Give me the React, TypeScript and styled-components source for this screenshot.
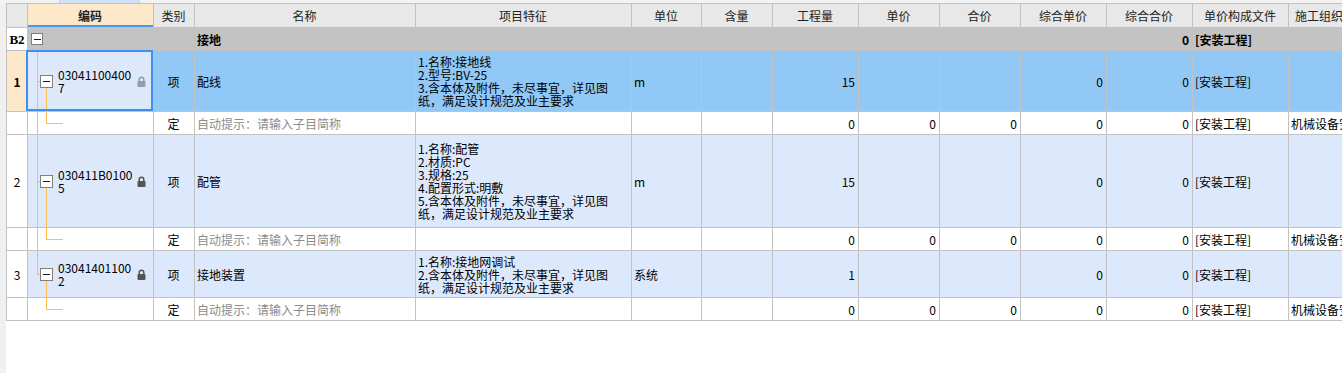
import React from 'react';
import styled, { createGlobalStyle, css } from 'styled-components';

const GlobalStyle = createGlobalStyle`
  html, body {
    margin: 0;
    padding: 0;
    background: #fff;
    overflow: hidden;
  }
  body {
    font-family: "Noto Sans CJK SC", "Liberation Sans", sans-serif;
    font-size: 12px;
    color: #000;
  }
`;

const COLUMNS = '21px 126px 41px 221px 216px 70px 71px 86px 81px 81px 86px 86px 96px 110px';
const GRID_LINE = '#c2c2c2';
const TREE = '#ffbd55';

type Tone = 'header' | 'group' | 'selected' | 'item' | 'sub';

const TONES: Record<Tone, string> = {
  header: '#e8e8e8',
  group: '#c3c3c3',
  selected: '#91c8f5',
  item: '#dce9fc',
  sub: '#ffffff',
};

const Page = styled.div`
  width: 1342px;
  height: 373px;
  display: flex;
  flex-direction: column;
  background: #fff;
  overflow: hidden;
`;

const TopStrip = styled.div`
  height: 3px;
  flex: none;
  display: flex;
  background: #f2f2f2;
`;

const TopTab = styled.div`
  margin-left: 59px;
  width: 79px;
  background: #cfe2f6;
  border-left: 1px solid #d4d4d4;
  border-right: 1px solid #d4d4d4;
`;

const Body = styled.div`
  flex: 1;
  display: flex;
  min-height: 0;
`;

const Gutter = styled.div`
  width: 6px;
  flex: none;
  background: #f0f0f0;
`;

const Grid = styled.div`
  align-self: flex-start;
  border-top: 1px solid ${GRID_LINE};
  border-left: 1px solid ${GRID_LINE};
`;

const Row = styled.div<{ $h: number; $tone: Tone }>`
  display: grid;
  grid-template-columns: ${COLUMNS};
  height: ${(p) => p.$h}px;
  background: ${(p) => TONES[p.$tone]};
`;

type Align = 'left' | 'center' | 'right';

const Cell = styled.div<{ $align?: Align; $bg?: string; $bold?: boolean; $muted?: boolean }>`
  box-sizing: border-box;
  position: relative;
  display: flex;
  align-items: center;
  justify-content: ${(p) => (p.$align === 'center' ? 'center' : p.$align === 'right' ? 'flex-end' : 'flex-start')};
  padding: 0 3px 0 2px;
  border-right: 1px solid ${GRID_LINE};
  border-bottom: 1px solid ${GRID_LINE};
  overflow: hidden;
  white-space: nowrap;
  line-height: 13px;
  background: ${(p) => p.$bg ?? 'transparent'};
  font-weight: ${(p) => (p.$bold ? 'bold' : 'normal')};
  color: ${(p) => (p.$muted ? '#8c8c8c' : '#000')};
`;

const HeadCell = styled(Cell)<{ $active?: boolean }>`
  justify-content: center;
  color: #222;
  ${(p) =>
    p.$active &&
    css`
      background: #fde8c9;
      font-weight: bold;
      box-shadow: inset 0 -2px 0 #4796ef;
    `}
`;

const RowNo = styled(Cell)`
  justify-content: center;
  padding: 0;
`;

const GroupNo = styled(RowNo)`
  font-family: "Liberation Serif", serif;
  font-size: 13px;
`;

const CodeCell = styled(Cell)<{ $selected?: boolean }>`
  padding: 0 7px 0 12px;
  overflow: visible;
  ${(p) =>
    p.$selected &&
    css`
      &::after {
        content: '';
        position: absolute;
        left: -2px;
        top: -1px;
        right: 0;
        bottom: 0;
        border: 2px solid #3d8ff0;
        pointer-events: none;
      }
    `}
`;

const GroupCodeCell = styled(CodeCell)`
  padding-left: 3px;
`;

const Toggle = styled.span<{ $size: number }>`
  box-sizing: border-box;
  flex: none;
  width: ${(p) => p.$size}px;
  height: ${(p) => p.$size}px;
  border: 1px solid #7f7f7f;
  background: #fff;
  display: flex;
  align-items: center;
  justify-content: center;
  position: relative;
  z-index: 1;

  &::before {
    content: '';
    width: 7px;
    height: 1px;
    background: #1a1a1a;
  }
`;

const CodeText = styled.div`
  margin-left: 5px;
  display: flex;
  flex-direction: column;
  line-height: 13px;
`;

const Lock = styled.svg`
  margin-left: auto;
  flex: none;
`;

const VLine = styled.span<{ $left: number; $top: string; $bottom: string }>`
  position: absolute;
  width: 1px;
  left: ${(p) => p.$left}px;
  top: ${(p) => p.$top};
  bottom: ${(p) => p.$bottom};
  background: ${TREE};
`;

const HLine = styled.span<{ $left: number; $width: number }>`
  position: absolute;
  height: 1px;
  top: 50%;
  left: ${(p) => p.$left}px;
  width: ${(p) => p.$width}px;
  background: ${TREE};
`;

const Spec = styled.div`
  display: flex;
  flex-direction: column;
`;

const HEADERS = ['', '编码', '类别', '名称', '项目特征', '单位', '含量', '工程量', '单价', '合价', '综合单价', '综合合价', '单价构成文件', '施工组织措施类别'];

type Item = {
  no: string;
  code: [string, string];
  name: string;
  spec: string[];
  unit: string;
  qty: string;
  h: number;
  selected?: boolean;
  last?: boolean;
};

const ITEMS: Item[] = [
  {
    no: '1',
    code: ['03041100400', '7'],
    name: '配线',
    spec: ['1.名称:接地线', '2.型号:BV-25', '3.含本体及附件，未尽事宜，详见图', '纸，满足设计规范及业主要求'],
    unit: 'm',
    qty: '15',
    h: 61,
    selected: true,
  },
  {
    no: '2',
    code: ['030411B0100', '5'],
    name: '配管',
    spec: ['1.名称:配管', '2.材质:PC', '3.规格:25', '4.配置形式:明敷', '5.含本体及附件，未尽事宜，详见图', '纸，满足设计规范及业主要求'],
    unit: 'm',
    qty: '15',
    h: 93,
  },
  {
    no: '3',
    code: ['03041401100', '2'],
    name: '接地装置',
    spec: ['1.名称:接地网调试', '2.含本体及附件，未尽事宜，详见图', '纸，满足设计规范及业主要求'],
    unit: '系统',
    qty: '1',
    h: 47,
    last: true,
  },
];

const LockIcon = ({ color }: { color: string }) => (
  <Lock width="9" height="11" viewBox="0 0 9 11">
    <path d="M2.2 5.2V3.6a2.3 2.3 0 0 1 4.6 0v1.6" fill="none" stroke={color} strokeWidth="1.5" />
    <rect x="0.5" y="5" width="8" height="6" rx="1" fill={color} />
  </Lock>
);

const ItemRows = ({ item }: { item: Item }) => {
  const tone: Tone = item.selected ? 'selected' : 'item';
  return (
    <>
      <Row $h={item.h} $tone={tone}>
        <RowNo $bg={item.selected ? '#fde8c9' : '#fff'} $bold={item.selected}>
          {item.no}
        </RowNo>
        <CodeCell $selected={item.selected} $bg="#dde9fb">
          <VLine $left={9} $top="0" $bottom={item.last ? '50%' : '-1px'} />
          <HLine $left={9} $width={4} />
          <VLine $left={18} $top="calc(50% + 6px)" $bottom="-1px" />
          <Toggle $size={13} />
          <CodeText>
            <span>{item.code[0]}</span>
            <span>{item.code[1]}</span>
          </CodeText>
          <LockIcon color={item.selected ? '#8c9fb7' : '#555'} />
        </CodeCell>
        <Cell $align="center">项</Cell>
        <Cell>{item.name}</Cell>
        <Cell>
          <Spec>
            {item.spec.map((line) => (
              <span key={line}>{line}</span>
            ))}
          </Spec>
        </Cell>
        <Cell>{item.unit}</Cell>
        <Cell />
        <Cell $align="right">{item.qty}</Cell>
        <Cell />
        <Cell />
        <Cell $align="right">0</Cell>
        <Cell $align="right">0</Cell>
        <Cell>[安装工程]</Cell>
        <Cell />
      </Row>
      <Row $h={23} $tone="sub">
        <RowNo />
        <CodeCell>
          {!item.last && <VLine $left={9} $top="0" $bottom="-1px" />}
          <VLine $left={18} $top="0" $bottom="50%" />
          <HLine $left={18} $width={17} />
        </CodeCell>
        <Cell $align="center">定</Cell>
        <Cell $muted>自动提示：请输入子目简称</Cell>
        <Cell />
        <Cell />
        <Cell />
        <Cell $align="right">0</Cell>
        <Cell $align="right">0</Cell>
        <Cell $align="right">0</Cell>
        <Cell $align="right">0</Cell>
        <Cell $align="right">0</Cell>
        <Cell>[安装工程]</Cell>
        <Cell>机械设备安装工程</Cell>
      </Row>
    </>
  );
};

export default function App() {
  return (
    <>
      <GlobalStyle />
      <Page>
        <TopStrip>
          <TopTab />
        </TopStrip>
        <Body>
          <Gutter />
          <Grid>
            <Row $h={24} $tone="header">
              {HEADERS.map((label, i) => (
                <HeadCell key={i} $active={i === 1}>
                  {label}
                </HeadCell>
              ))}
            </Row>
            <Row $h={23} $tone="group">
              <GroupNo $bg="#fff" $bold>
                B2
              </GroupNo>
              <GroupCodeCell>
                <VLine $left={9} $top="calc(50% + 6px)" $bottom="-1px" />
                <Toggle $size={12} />
              </GroupCodeCell>
              <Cell />
              <Cell $bold>接地</Cell>
              <Cell />
              <Cell />
              <Cell />
              <Cell />
              <Cell />
              <Cell />
              <Cell />
              <Cell $align="right" $bold>
                0
              </Cell>
              <Cell $bold>[安装工程]</Cell>
              <Cell />
            </Row>
            {ITEMS.map((item) => (
              <ItemRows key={item.no} item={item} />
            ))}
          </Grid>
        </Body>
      </Page>
    </>
  );
}
